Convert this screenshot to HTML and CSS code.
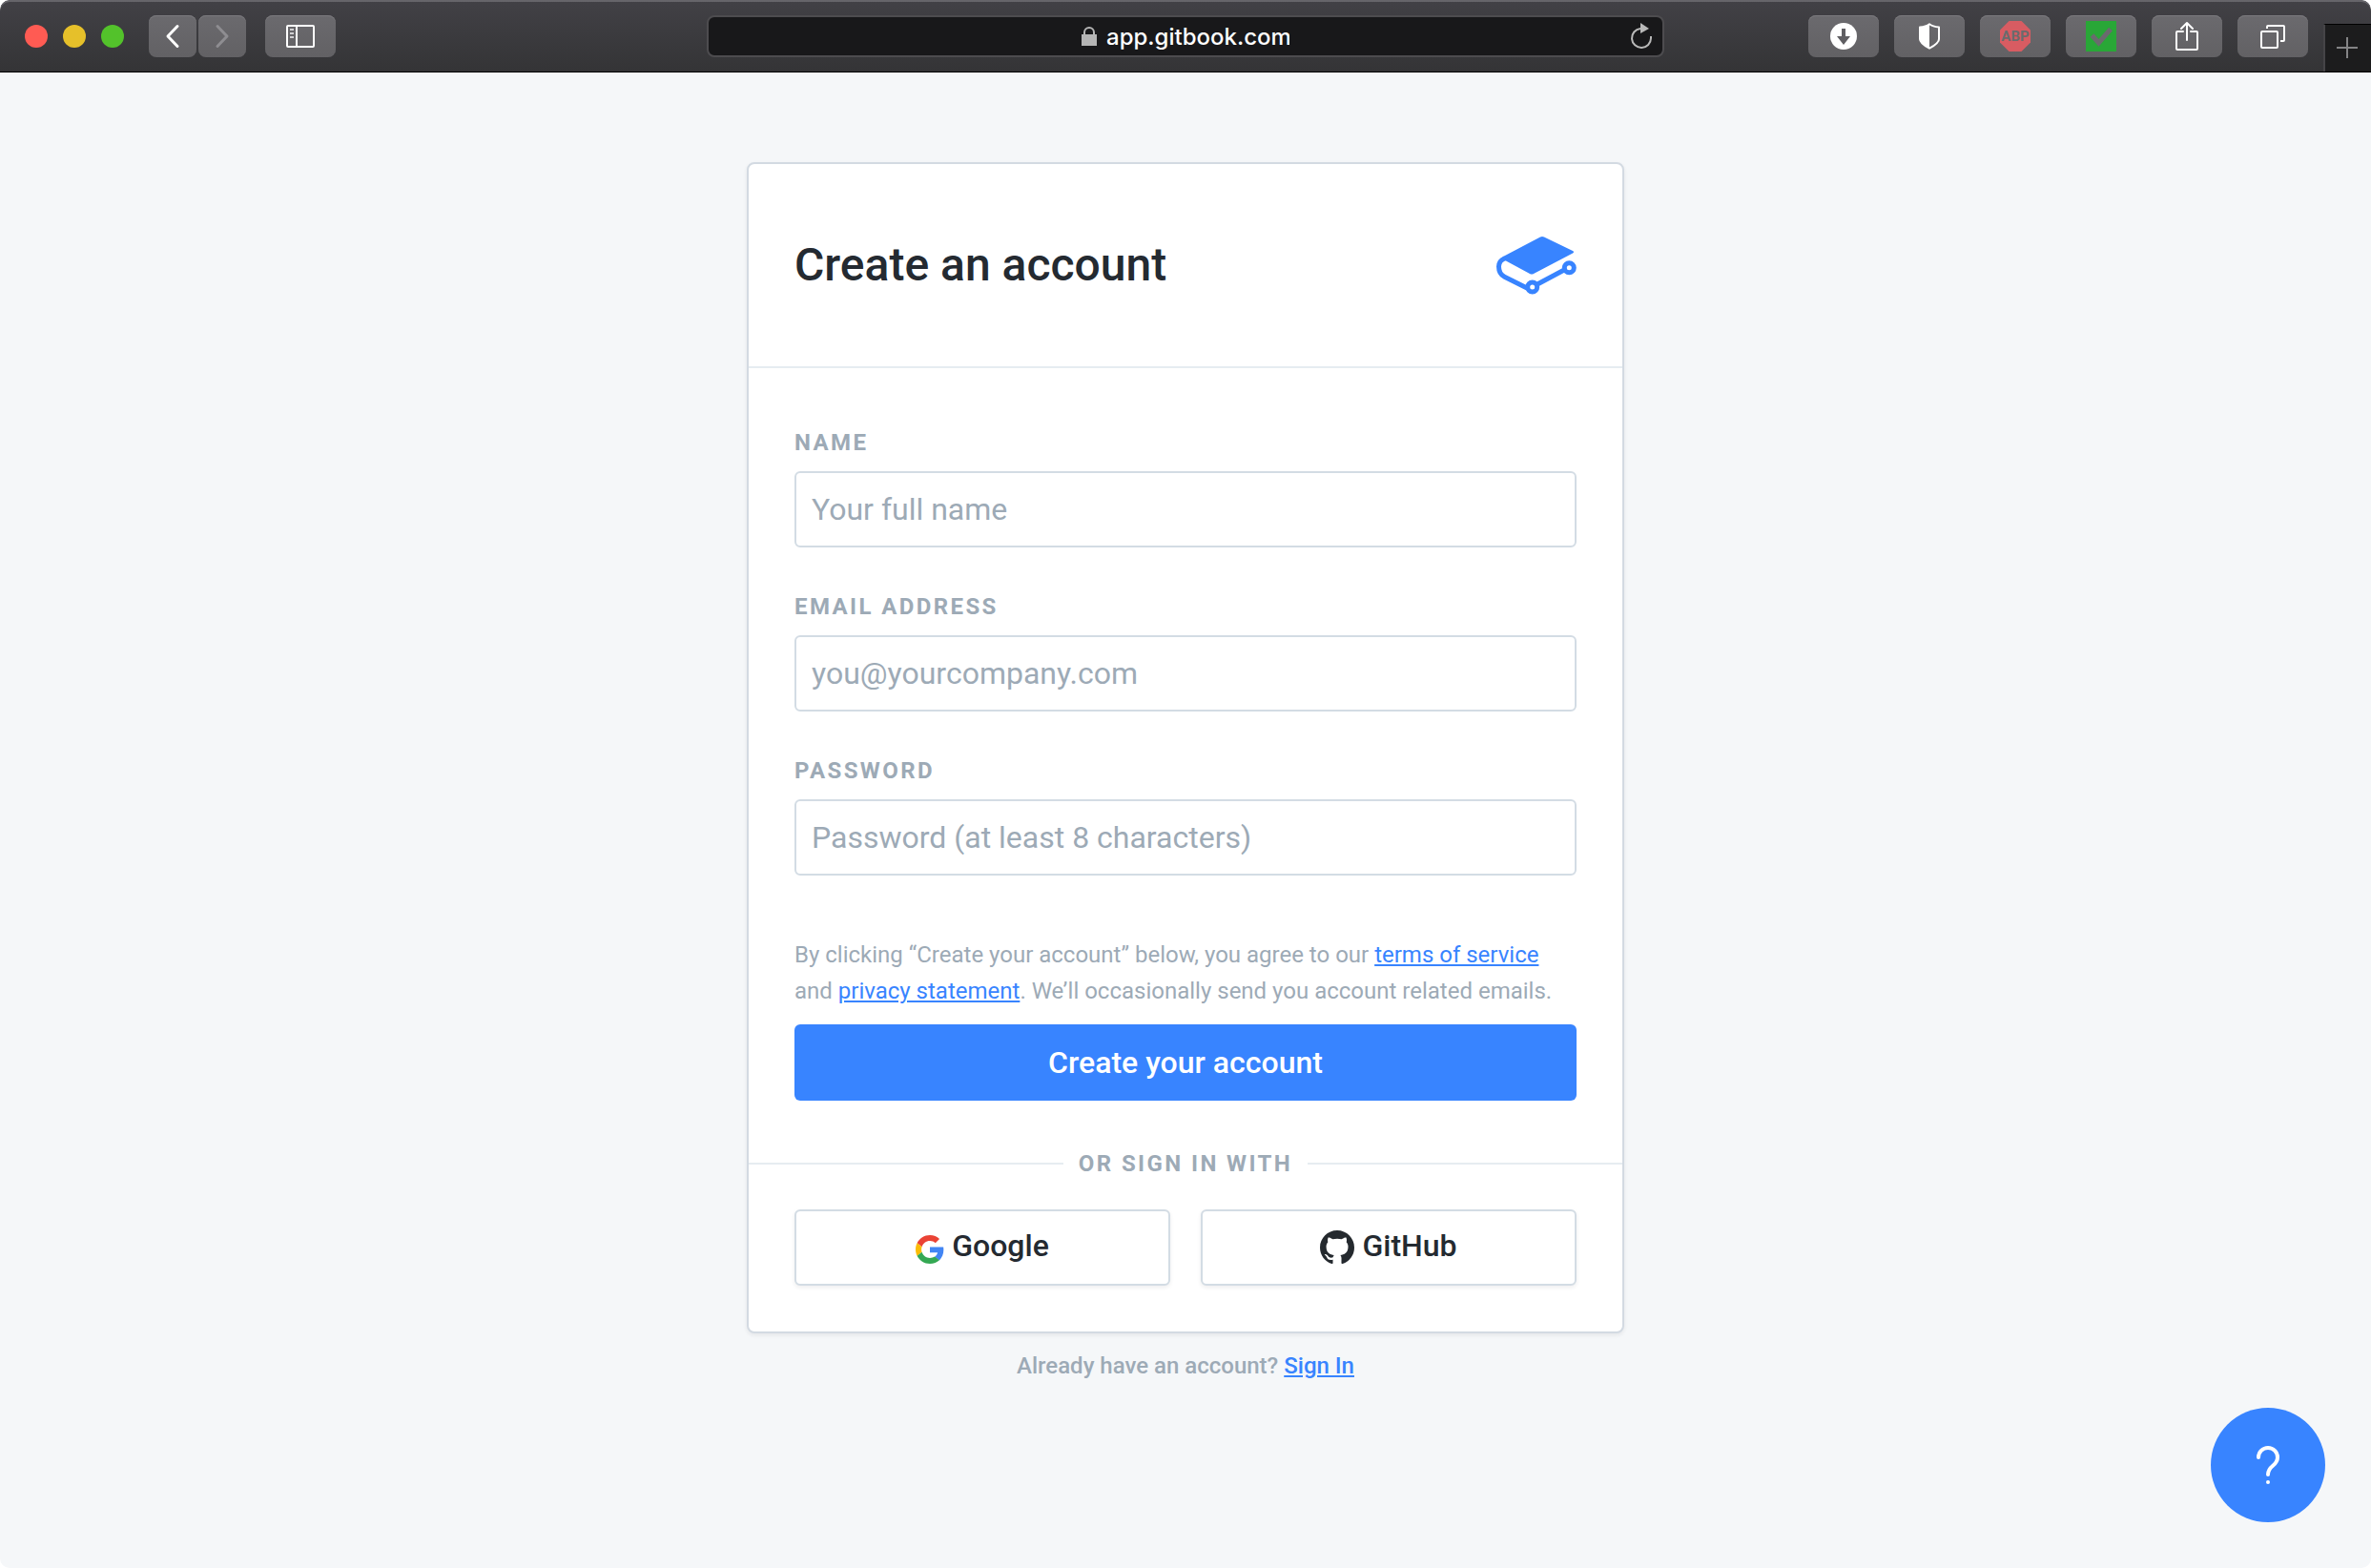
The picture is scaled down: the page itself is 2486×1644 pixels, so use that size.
FILE: index.html
```html
<!DOCTYPE html>
<html lang="en">
<head>
<meta charset="utf-8">
<meta name="viewport" content="width=device-width, initial-scale=1">
<title>Create an account</title>
<link rel="stylesheet" href="styles.css">
</head>
<body class="window">
<header class="toolbar">
  <div class="toolbar-left">
    <div class="lights"><span class="light light-close"></span><span class="light light-min"></span><span class="light light-max"></span></div>
    <div class="nav">
      <button class="tool tool-small" type="button" aria-label="Back"><svg width="16" height="26" viewBox="0 0 16 26" fill="none" stroke="#fff" stroke-width="3" stroke-linecap="round" stroke-linejoin="round"><path d="M13 2.500L3 13l10 10.500"/></svg></button>
      <button class="tool tool-small" type="button" aria-label="Forward"><svg width="16" height="26" viewBox="0 0 16 26" fill="none" stroke="#8e8d91" stroke-width="3" stroke-linecap="round" stroke-linejoin="round"><path d="M3 2.500L13 13 3 23.500"/></svg></button>
    </div>
    <button class="tool" type="button" aria-label="Sidebar"><svg width="30" height="24" viewBox="0 0 30 24" fill="none" stroke="#fff" stroke-width="2"><rect x="1" y="1" width="28" height="22" rx="1"/><path d="M11 1v22"/><path d="M4 5h4M4 9h4M4 13h4" stroke="#d0d0d2"/></svg></button>
  </div>
  <form class="address">
    <div class="address-main">
      <svg width="16" height="20" viewBox="0 0 16 20"><path d="M3 9V6a5 5 0 0 1 10 0v3" fill="none" stroke="#b5b5b5" stroke-width="2"/><path d="M0 8h16v12H0z" fill="#b5b5b5"/></svg>
      <input class="address-input" type="text" aria-label="Address" value="app.gitbook.com">
    </div>
    <button class="reload" type="button" aria-label="Reload"><svg width="24" height="28" viewBox="0 0 24 28"><path d="M11 6a10 10 0 1 0 11 10v-2" fill="none" stroke="#b9b9b9" stroke-width="2"/><path d="M11 0l9 6-9 5z" fill="#b9b9b9"/></svg></button>
  </form>
  <div class="toolbar-right">
    <button class="tool" type="button" aria-label="Downloads"><svg width="28" height="28" viewBox="0 0 28 28"><circle cx="14" cy="14" r="14" fill="#fff"/><path d="M12 6h4v8h5l-7 9-7-9h5z" fill="#5f5e62"/></svg></button>
    <button class="tool" type="button" aria-label="Privacy report"><svg width="24" height="28" viewBox="0 0 24 28"><path d="M12 1.200c3 2.300 6.500 3 10 3.300V17c0 4-5 7-10 9.700C7 24 2 21 2 17V4.500c3.500-.3 7-1 10-3.300z" fill="none" stroke="#fff" stroke-width="2" stroke-linejoin="round"/><path d="M12 1C9 3.500 5 4.200 2 4.500V17c0 4 5 7 10 9.700z" fill="#fff"/></svg></button>
    <button class="tool" type="button" aria-label="Ad blocker"><svg width="32" height="32" viewBox="0 0 32 32"><path d="M9.500 0h13L32 9.500v13L22.500 32h-13L0 22.500v-13z" fill="#d85c62"/><text class="abp" x="16" y="21" text-anchor="middle">ABP</text></svg></button>
    <button class="tool" type="button" aria-label="Checker"><svg width="32" height="32" viewBox="0 0 32 32"><path d="M0 0h32v32H0z" fill="#29a737"/><path d="M6.500 15l7 8L26 8.500" fill="none" stroke="#6a6b6d" stroke-width="5"/></svg></button>
    <button class="tool" type="button" aria-label="Share"><svg width="24" height="32" viewBox="0 0 24 32" fill="none" stroke="#fff" stroke-width="2" stroke-linejoin="round" stroke-linecap="round"><path d="M8 11H2a1 1 0 0 0-1 1v17a1 1 0 0 0 1 1h20a1 1 0 0 0 1-1V12a1 1 0 0 0-1-1h-6M12 20V2M6 8l6-6 6 6"/></svg></button>
    <button class="tool" type="button" aria-label="Tabs"><svg width="26" height="26" viewBox="0 0 26 26" fill="none" stroke="#fff" stroke-width="2" stroke-linejoin="round"><rect x="1" y="8" width="17" height="17" rx="1"/><path d="M7 5V3a1 1 0 0 1 1-1h16a1 1 0 0 1 1 1v14a1 1 0 0 1-1 1h-3"/></svg></button>
  </div>
  <button class="new-tab" type="button" aria-label="New tab"><svg width="22" height="22" viewBox="0 0 22 22"><path d="M0 11h22M11 0v22" stroke="#848486" stroke-width="2"/></svg></button>
</header>

<main class="page">
  <section class="card">
    <header class="card-header">
      <h1 class="title">Create an account</h1>
      <svg width="84" height="61" viewBox="0 0 84 61"><path d="M46 .5Q48 -.4 50 .5L80 15Q82 16.200 80 17.500L39 39Q37 40 35 39L10 25.500Q7 24 5.500 26L2 26Q3 23.300 8 20.500z" fill="#3884ff"/><g fill="none" stroke="#3884ff" stroke-width="5"><path d="M9 22.700C4.500 24.500 2.500 27 2.500 31.500 2.500 36.500 5 40.500 8.500 42.200L32 54M43 50l29-15.500"/><circle cx="37.700" cy="53" r="5"/><circle cx="76.300" cy="32.700" r="5"/></g></svg>
    </header>
    <form class="signup">
      <div class="field"><label class="label" for="name">NAME</label><input class="input" id="name" type="text" placeholder="Your full name"></div>
      <div class="field"><label class="label" for="email">EMAIL ADDRESS</label><input class="input" id="email" type="email" placeholder="you@yourcompany.com"></div>
      <div class="field"><label class="label" for="password">PASSWORD</label><input class="input" id="password" type="password" placeholder="Password (at least 8 characters)"></div>
      <div class="submit">
        <p class="terms">By clicking “Create your account” below, you agree to our <a class="link" href="#terms">terms of service</a> and <a class="link" href="#privacy">privacy statement</a>. We’ll occasionally send you account related emails.</p>
        <button class="primary" type="submit">Create your account</button>
      </div>
    </form>
    <div class="divider"><span class="label">OR SIGN IN WITH</span></div>
    <div class="social">
      <button class="provider" type="button"><svg class="google" width="30" height="30" viewBox="0 0 48 48"><path fill="#EA4335" d="M24 9.500c3.540 0 6.710 1.220 9.210 3.600l6.850-6.850C35.900 2.380 30.470 0 24 0 14.620 0 6.510 5.380 2.560 13.220l7.980 6.190C12.430 13.720 17.740 9.500 24 9.500z"/><path fill="#4285F4" d="M46.980 24.550c0-1.570-.15-3.090-.38-4.550H24v9.020h12.940c-.58 2.960-2.260 5.480-4.780 7.180l7.730 6c4.510-4.180 7.090-10.360 7.090-17.650z"/><path fill="#FBBC05" d="M10.530 28.590c-.48-1.450-.76-2.990-.76-4.590s.27-3.140.76-4.590l-7.980-6.190C.92 16.460 0 20.120 0 24c0 3.880.92 7.540 2.560 10.780l7.970-6.190z"/><path fill="#34A853" d="M24 48c6.480 0 11.930-2.130 15.890-5.810l-7.730-6c-2.150 1.450-4.920 2.300-8.160 2.300-6.260 0-11.570-4.220-13.470-9.910l-7.980 6.190C6.510 42.620 14.620 48 24 48z"/></svg><span class="provider-name">Google</span></button>
      <button class="provider" type="button"><svg width="36" height="36" viewBox="0 0 16 16"><path fill="#24292e" d="M8 0C3.580 0 0 3.580 0 8c0 3.540 2.290 6.530 5.470 7.590.4.070.55-.17.55-.38 0-.19-.01-.82-.01-1.490-2.010.37-2.530-.49-2.690-.94-.09-.23-.48-.94-.82-1.130-.28-.15-.68-.52-.01-.53.63-.01 1.080.58 1.230.82.72 1.210 1.870.87 2.330.66.070-.52.28-.87.510-1.070-1.780-.2-3.640-.89-3.640-3.950 0-.87.310-1.590.820-2.150-.08-.2-.36-1.020.080-2.120 0 0 .67-.21 2.200.82.640-.18 1.320-.27 2-.27.680 0 1.360.090 2 .27 1.530-1.040 2.200-.82 2.200-.82.440 1.100.160 1.920.080 2.120.510.560.820 1.270.820 2.150 0 3.070-1.870 3.750-3.650 3.950.290.250.540.730.540 1.480 0 1.070-.01 1.930-.01 2.200 0 .21.150.46.550.38A8.013 8.013 0 0 0 16 8c0-4.420-3.580-8-8-8z"/></svg><span class="provider-name">GitHub</span></button>
    </div>
  </section>
  <p class="signin">Already have an account? <a class="link" href="#signin">Sign In</a></p>
</main>

<button class="help" type="button" aria-label="Help"><svg width="24" height="40" viewBox="0 0 24 40"><path d="M2 12a10 10 0 0 1 20 0C22 21.500 12 20 12 30" fill="none" stroke="#fff" stroke-width="4" stroke-linecap="round"/><circle cx="12" cy="38" r="2" fill="#fff"/></svg></button>
</body>
</html>
```
FILE: styles.css
```css
*, *::before, *::after { box-sizing: border-box; }
html { background: #fff; }
button, input { font: inherit; color: inherit; }
button { padding: 0; border: 0; cursor: pointer; }
h1, p { margin: 0; }
svg { display: block; flex: none; }

.window {
  display: flex;
  flex-direction: column;
  min-height: 100vh;
  margin: 0;
  overflow-x: hidden;
  border-radius: 10px;
  background: #f5f7f9;
  color: #242a31;
  font-family: Roboto, "Liberation Sans", sans-serif;
}

/* Browser toolbar */
.toolbar {
  position: relative;
  display: grid;
  grid-template-columns: 1fr minmax(0, 1004px) 1fr;
  align-items: start;
  padding: 16px 0 15px;
  border-bottom: 1px solid #000;
  border-radius: 10px 10px 0 0;
  background: linear-gradient(#424146, #343436);
  box-shadow: inset 0 2px #66656a;
}
.toolbar-left { display: flex; align-items: center; gap: 20px; padding-left: 26px; }
.lights { display: flex; gap: 16px; margin-right: 6px; }
.light { width: 24px; height: 24px; border-radius: 50%; }
.light-close { background: #ff5b53; }
.light-min { background: #e6c02a; }
.light-max { background: #53c22b; }
.nav { display: flex; gap: 2px; }
.tool {
  display: flex;
  align-items: center;
  justify-content: center;
  width: 74px;
  height: 44px;
  border-radius: 8px;
  background: linear-gradient(#6b6a6e, #626164);
  box-shadow: inset 0 1px #7b7a7e;
}
.tool-small { width: 50px; }
.abp { fill: #6a6b6d; font-size: 15px; font-weight: 700; }
.address {
  display: grid;
  grid-template-columns: 1fr auto 1fr;
  align-items: center;
  height: 44px;
  border: 2px solid #4d4c4f;
  border-radius: 8px;
  background: #18181a;
}
.address::before { content: ""; }
.address-main { display: flex; align-items: center; gap: 10px; }
.address-input {
  width: 192px;
  height: 36px;
  padding: 0;
  border: 0;
  background: none;
  color: #fff;
  font-family: Inter, "Liberation Sans", sans-serif;
  font-size: 24px;
  font-weight: 500;
}
.reload { justify-self: end; margin-right: 10px; background: none; }
.toolbar-right { display: flex; justify-content: flex-end; gap: 16px; padding-right: 66px; }
.new-tab {
  position: absolute;
  right: 0;
  bottom: 0;
  display: flex;
  align-items: center;
  justify-content: center;
  width: 50px;
  height: 50px;
  padding: 0 2px 2px 0;
  border-top: 1px solid #000;
  border-left: 2px solid #454447;
  background: #1c1c1d;
}

/* Sign-up card */
.page {
  display: flex;
  flex-direction: column;
  align-items: center;
  padding: 94px 24px 48px;
}
.card {
  width: 100%;
  max-width: 920px;
  border: 2px solid #d3dae2;
  border-radius: 8px;
  background: #fff;
  box-shadow: 0 2px 4px rgba(36, 42, 49, 0.08);
}
.card-header {
  display: flex;
  align-items: center;
  justify-content: space-between;
  padding: 74px 48px;
  border-bottom: 2px solid #e6ecf1;
}
.title { font-size: 48px; line-height: 64px; font-weight: 500; }
.signup { display: flex; flex-direction: column; gap: 48px; padding: 64px 48px 52px; }
.field { display: flex; flex-direction: column; gap: 16px; }
.label {
  color: #9daab6;
  font-size: 24px;
  line-height: 28px;
  font-weight: 700;
  letter-spacing: 0.1em;
}
.input {
  width: 100%;
  height: 80px;
  padding: 0 16px;
  border: 2px solid #d3dce4;
  border-radius: 6px;
  background: #fff;
  font-size: 32px;
}
.input::placeholder { color: #9daab6; opacity: 1; }
.submit { display: flex; flex-direction: column; gap: 16px; padding-top: 16px; }
.terms { color: #9daab6; font-size: 24px; line-height: 38px; }
.link { color: #3884ff; text-decoration: underline; }
.primary {
  height: 80px;
  border-radius: 6px;
  background: #3884ff;
  color: #fff;
  font-size: 32px;
  font-weight: 500;
}
.divider { display: flex; align-items: center; gap: 16px; }
.divider::before, .divider::after { content: ""; flex: 1; height: 2px; background: #e6ecf1; }
.social { display: grid; grid-template-columns: 1fr 1fr; gap: 32px; padding: 34px 48px 48px; }
.provider {
  display: flex;
  align-items: center;
  justify-content: center;
  gap: 8px;
  height: 80px;
  border: 2px solid #d3dce4;
  border-radius: 6px;
  background: #fff;
  box-shadow: 0 2px 4px rgba(36, 42, 49, 0.08);
  font-size: 32px;
  font-weight: 500;
}
.google { margin-top: 4px; }
.provider-name { padding-bottom: 4px; }
.signin { margin-top: 20px; color: #9daab6; font-size: 24px; line-height: 28px; font-weight: 500; }

.help {
  position: fixed;
  right: 48px;
  bottom: 48px;
  display: flex;
  align-items: center;
  justify-content: center;
  width: 120px;
  height: 120px;
  border-radius: 50%;
  background: #3884ff;
}
```
